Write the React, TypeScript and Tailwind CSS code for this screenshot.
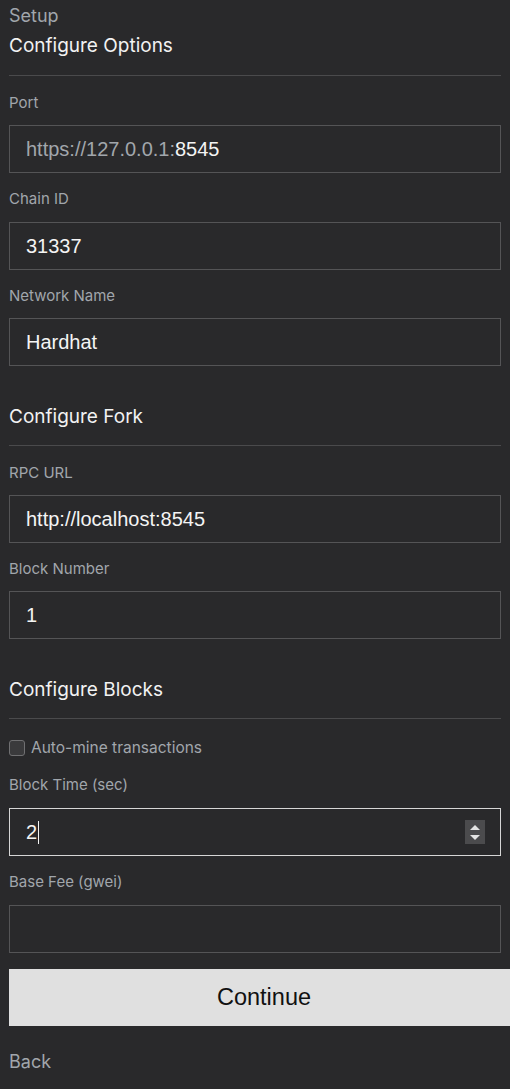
import React from 'react';

const labelCls = 'block h-5 leading-5 text-[15px] text-[#a1a6ac]';
const boxCls =
  'flex items-center h-12 w-full border border-[#545456] pl-4 text-[20px] text-[#f4f4f4] font-["Liberation_Sans",Arial,sans-serif]';

function Field({ label, children, mb = 'mb-3' }: { label: string; children?: React.ReactNode; mb?: string }) {
  return (
    <div className="pt-4">
      <label className={`${labelCls} ${mb}`}>{label}</label>
      <div className={boxCls}>{children}</div>
    </div>
  );
}

function Section({ title, children }: { title: string; children: React.ReactNode }) {
  return (
    <div>
      <h2 className="mt-[37px] text-[19px] leading-7 font-normal text-[#f2f2f2]">{title}</h2>
      <div className="mt-[14px] mb-px h-px bg-[#4a4a4c]" />
      {children}
    </div>
  );
}

export default function App() {
  return (
    <div className="min-h-screen overflow-hidden bg-[#29292b] px-[9px] pt-[2px] pb-[15px] font-['Inter',sans-serif]">
      <div className="text-lg leading-7 text-[#a1a6ac]">Setup</div>
      <h2 className="mt-[2px] text-[19px] leading-7 font-normal text-[#f2f2f2]">Configure Options</h2>
      <div className="mt-[15px] mb-px h-px bg-[#4a4a4c]" />

      <Field label="Port">
        <span className="text-[#a1a6ac]">https://127.0.0.1:</span>
        <span>8545</span>
      </Field>
      <Field label="Chain ID" mb="mb-[13px]">31337</Field>
      <Field label="Network Name">Hardhat</Field>

      <Section title="Configure Fork">
        <Field label="RPC URL">http://localhost:8545</Field>
        <Field label="Block Number">1</Field>
      </Section>

      <Section title="Configure Blocks">
        <div className="mt-[19px] flex h-5 items-center gap-[6px]">
          <span className="h-4 w-4 rounded-[3px] border border-[#707072] bg-[#3a3a3c]" />
          <span className="text-[15.5px] text-[#a1a6ac]">Auto-mine transactions</span>
        </div>
        <div className="pt-[17px]">
          <label className={`${labelCls} mb-[13px]`}>Block Time (sec)</label>
          <div className={`${boxCls} relative border-[#d6d6d6]`}>
            <span>2</span>
            <span className="ml-px h-[23px] w-px bg-[#f4f4f4]" />
            <div className="absolute right-[15px] top-[11px] flex h-6 w-5 flex-col items-center justify-center gap-[5px] bg-[#4b4b4d]">
              <svg width="10" height="5" viewBox="0 0 10 5">
                <polygon points="5,0 10,5 0,5" fill="#e4e4e4" />
              </svg>
              <svg width="10" height="5" viewBox="0 0 10 5">
                <polygon points="0,0 10,0 5,5" fill="#e4e4e4" />
              </svg>
            </div>
          </div>
        </div>
        <div className="pt-4">
          <label className={`${labelCls} mb-[13px]`}>Base Fee (gwei)</label>
          <div className={boxCls} />
        </div>
      </Section>

      <button className="mt-4 flex h-[57px] w-[510px] items-center justify-center bg-[#e0e0e0] text-[23.5px] text-[#111] font-['Liberation_Sans',Arial,sans-serif]">
        Continue
      </button>

      <div className="mt-[22px] text-lg leading-7 text-[#a1a6ac]">Back</div>
    </div>
  );
}
